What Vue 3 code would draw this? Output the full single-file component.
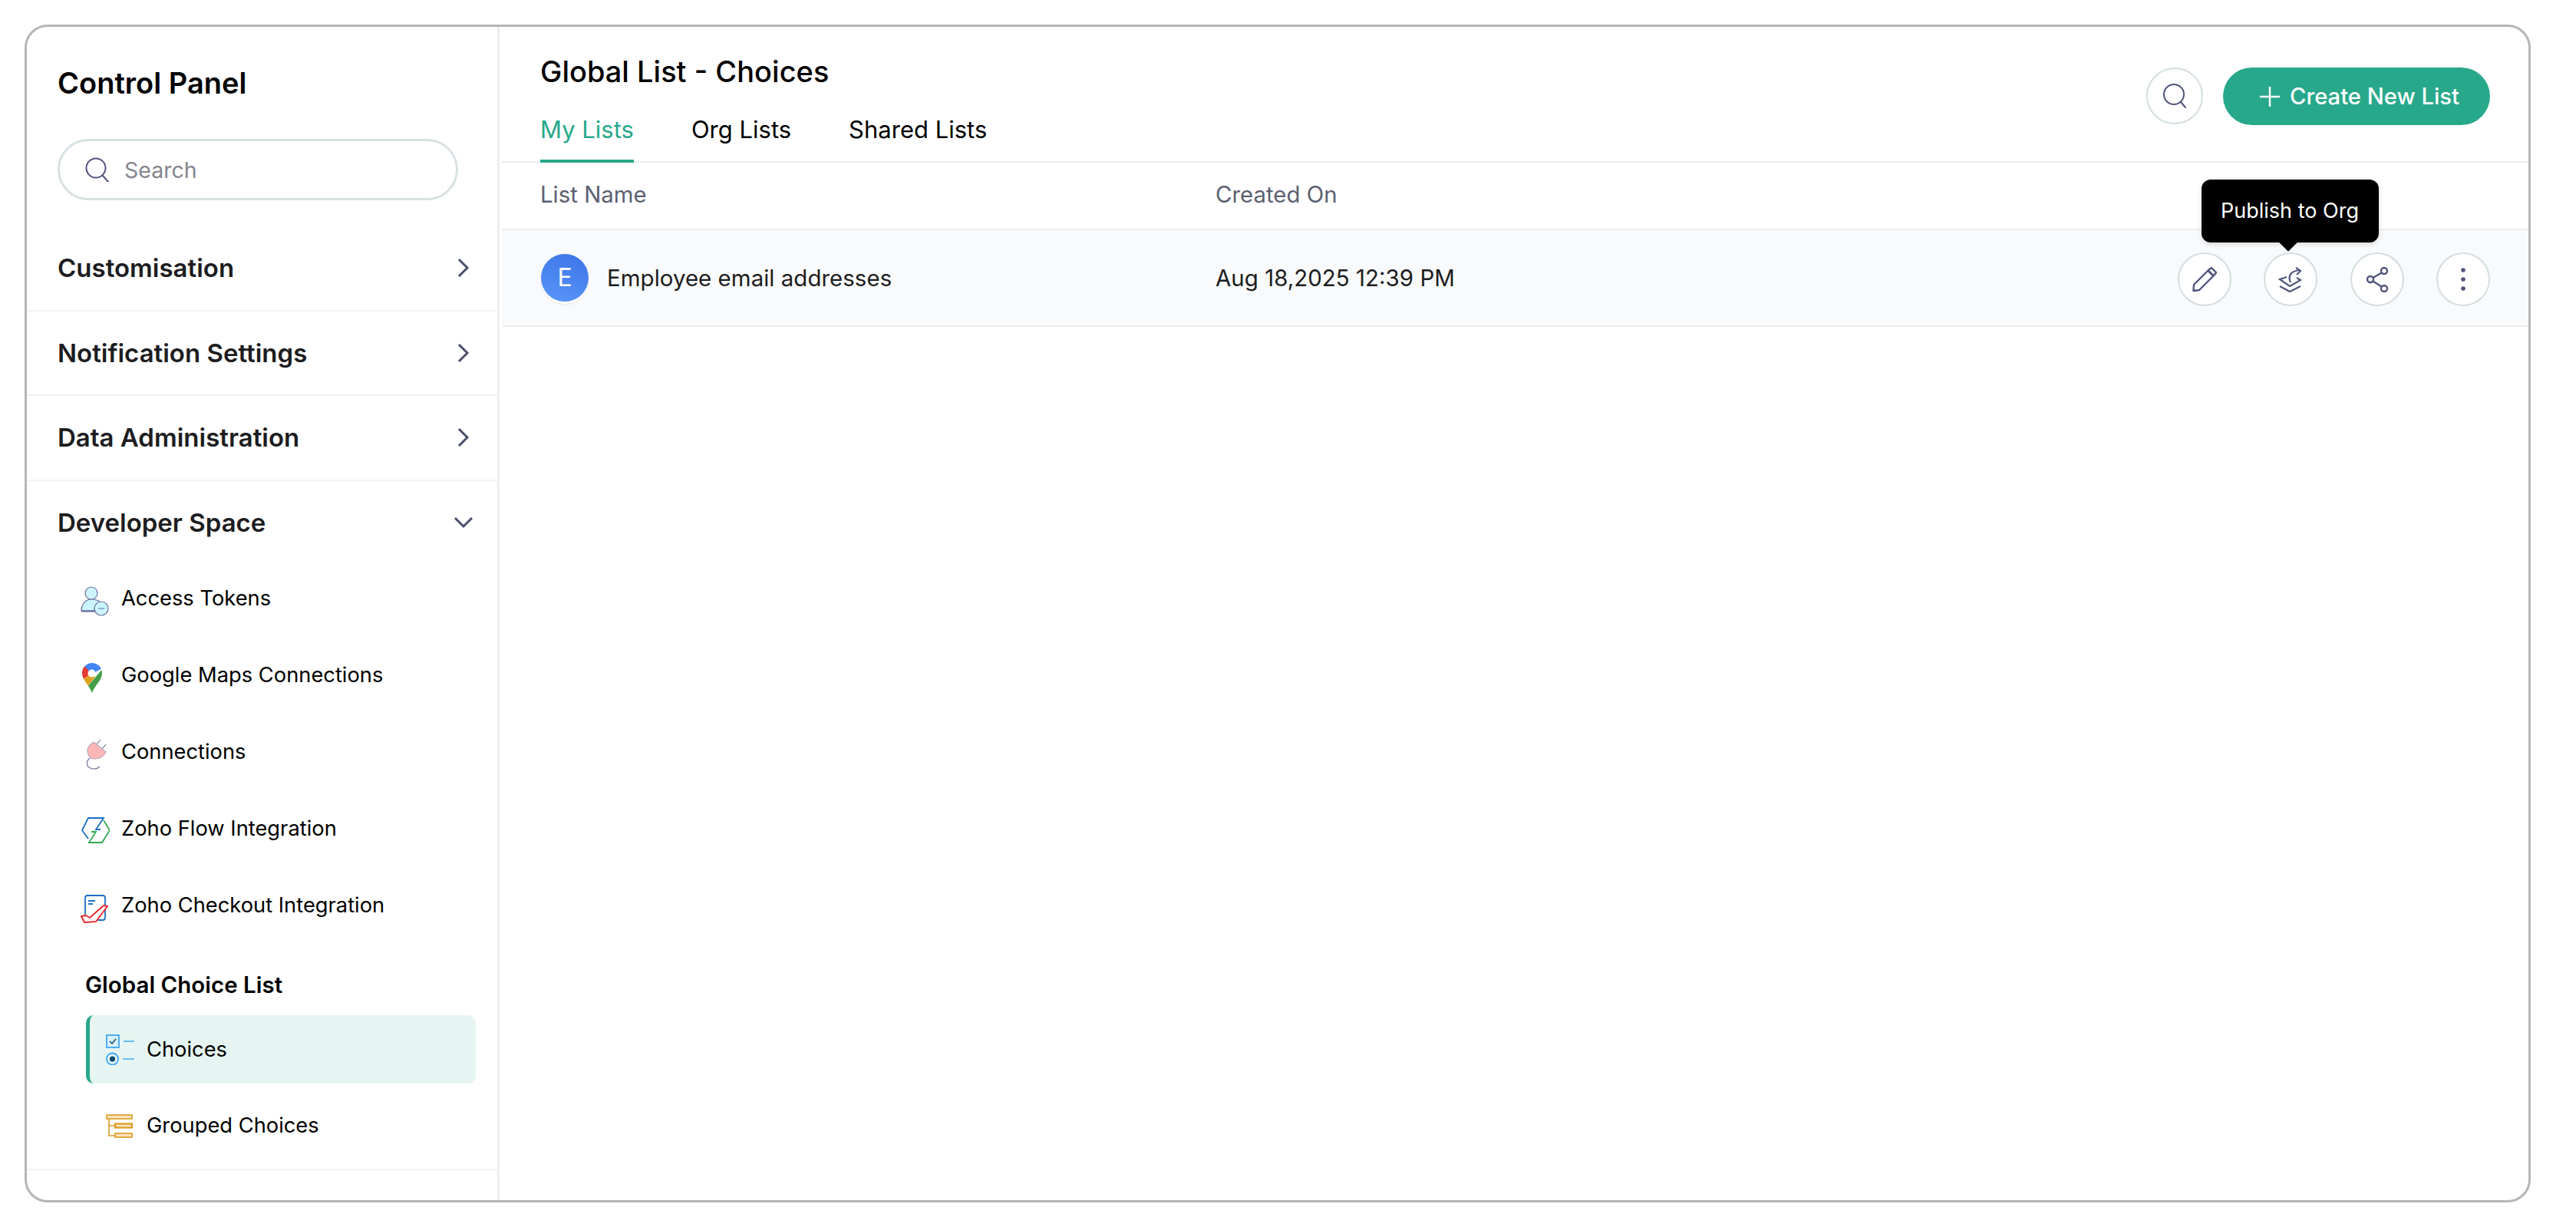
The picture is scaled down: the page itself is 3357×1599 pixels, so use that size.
<script setup>
const sections = ['Customisation', 'Notification Settings', 'Data Administration']
const tabs = ['My Lists', 'Org Lists', 'Shared Lists']
</script>

<template>
  <div class="page">
    <div class="frame">
      <aside class="sidebar">
        <h1 class="panel-title">Control Panel</h1>
        <div class="search">
          <svg class="search-icon" viewBox="0 0 32 32" fill="none" stroke="#50557a" stroke-width="2">
            <circle cx="14" cy="14" r="12.500" />
            <path d="M23 24l7 8" stroke-linecap="round" />
          </svg>
          <span>Search</span>
        </div>

        <div class="sections">
          <div v-for="s in sections" :key="s" class="section-row">
            <span>{{ s }}</span>
            <svg class="chevron" viewBox="0 0 16 26" fill="none" stroke="#4a4e6b" stroke-width="3">
              <path d="M2 2l11 11L2 24" />
            </svg>
          </div>
          <div class="section-row dev-head">
            <span>Developer Space</span>
            <svg class="chevron-down" viewBox="0 0 26 16" fill="none" stroke="#4a4e6b" stroke-width="3">
              <path d="M2 2l11 11L24 2" />
            </svg>
          </div>
        </div>

        <div class="nav-item">
          <svg class="nav-icon" viewBox="0 0 38 42" stroke="#6a6f9c" stroke-width="1.200">
            <circle cx="14" cy="11" r="8" fill="#ccf4ff" />
            <path d="M1 34c0-9 6-15 13-15 5 0 9 1 12 4-4 1-8 5-8 11z" fill="#ccf4ff" />
            <path d="M1 34.500h18" stroke-width="2.200" />
            <circle cx="27" cy="31" r="9" fill="#ccf4ff" />
            <path d="M23 31h8" stroke="#8fb3cf" stroke-width="2" />
          </svg>
          <span>Access Tokens</span>
        </div>
        <div class="nav-item">
          <svg class="nav-icon" viewBox="0 0 38 42">
            <clipPath id="pin">
              <path d="M15 2a13 13 0 0 1 13 13c0 10-9 15-13 26C11 30 2 25 2 15A13 13 0 0 1 15 2z" />
            </clipPath>
            <g clip-path="url(#pin)">
              <polygon points="0,0 32,0 30,8 15,16 4,7" fill="#4285f4" />
              <polygon points="0,4 5,6 14,16 2,24 0,24" fill="#e53935" />
              <polygon points="2,24 14,16 19,20 8,34" fill="#dfa11f" />
              <polygon points="30,8 30,20 15,44 8,34" fill="#43a047" />
            </g>
            <circle cx="14.500" cy="15.500" r="5" fill="#fff" />
          </svg>
          <span>Google Maps Connections</span>
        </div>
        <div class="nav-item">
          <svg class="nav-icon" viewBox="0 0 38 42" fill="none" stroke="#6a6a90" stroke-width="1.100">
            <path d="M21 8l5-6M28 14l5-6" />
            <path d="M17 5l16 13c-3 6-8 9-15 9-6 0-9-5-9-11 0-5 4-8 8-11z" fill="#fdb6b6" stroke="#b9a4b8" />
            <path d="M12 26c-5 4-5 11 1 13 4 2 9 1 12-2" />
          </svg>
          <span>Connections</span>
        </div>
        <div class="nav-item">
          <svg class="nav-icon" viewBox="0 0 38 42" fill="none" stroke-width="1.800">
            <path d="M10 31L2 20l8-16h20L20 19h6" stroke="#1e6fc4" />
            <path d="M30 7l8 13-10 16H11l9-14h-6" stroke="#34a853" />
          </svg>
          <span>Zoho Flow Integration</span>
        </div>
        <div class="nav-item">
          <svg class="nav-icon" viewBox="0 0 38 42" fill="none" stroke-width="1.800">
            <rect x="6" y="5" width="26" height="32" rx="3" stroke="#1e6fc4" />
            <path d="M10 12h9M10 16h6" stroke="#1e6fc4" />
            <path d="M1 32l6-1 5 3 18-16 5 1-15 20-15 1z" fill="#fff" stroke="#e62e2e" stroke-width="2" stroke-linejoin="round" />
          </svg>
          <span>Zoho Checkout Integration</span>
        </div>

        <div class="group-title">Global Choice List</div>
        <div class="sub-item active">
          <svg class="sub-icon" viewBox="0 0 38 42" fill="none">
            <rect x="1" y="3" width="16" height="16" fill="#d8f0fb" stroke="#3fa9f5" stroke-width="1.800" />
            <path d="M5 11l3 3 5-6" stroke="#0c4a6e" stroke-width="1.500" />
            <path d="M23 11h14M22 34h15" stroke="#3fa9f5" stroke-width="1.400" />
            <circle cx="8.500" cy="34" r="7.500" stroke="#3fa9f5" stroke-width="1.800" />
            <circle cx="8.500" cy="34" r="3.600" fill="#0c4a6e" />
          </svg>
          <span>Choices</span>
        </div>
        <div class="sub-item">
          <svg class="sub-icon" viewBox="0 0 38 42" stroke="#dc9a22" stroke-width="1.600" fill="#fae3bd">
            <rect x="1" y="7" width="33" height="5" />
            <rect x="12" y="18.500" width="22" height="5" stroke-width="2.200" />
            <rect x="12" y="31" width="22" height="5" />
            <path d="M4 12v22h8M4 21h8" fill="none" />
          </svg>
          <span>Grouped Choices</span>
        </div>
        <div class="side-end"></div>
      </aside>

      <main class="main">
        <header class="main-head">
          <div class="head-left">
            <h2 class="list-title">Global List - Choices</h2>
            <nav class="tabs">
              <a v-for="(t, i) in tabs" :key="t" class="tab" :class="{ on: i === 0 }">{{ t }}</a>
            </nav>
          </div>
          <div class="head-right">
            <button class="round big">
              <svg viewBox="0 0 32 34" width="32" height="34" fill="none" stroke="#50557a" stroke-width="2">
                <circle cx="15" cy="15" r="13" />
                <path d="M24 25l6 7" stroke-linecap="round" />
              </svg>
            </button>
            <button class="create">
              <svg viewBox="0 0 26 26" width="26" height="26" stroke="#fff" stroke-width="2.400">
                <path d="M13 0v26M0 13h26" />
              </svg>
              Create New List
            </button>
          </div>
        </header>

        <div class="table-head">
          <span>List Name</span>
          <span>Created On</span>
        </div>
        <div class="table-row">
          <div class="name-cell">
            <span class="avatar">E</span>
            <span>Employee email addresses</span>
          </div>
          <div class="date-cell">Aug 18,2025 12:39 PM</div>
          <div class="actions">
            <button class="round">
              <svg viewBox="0 0 32 34" width="32" height="34" fill="none" stroke="#50557a" stroke-width="2.400" stroke-linejoin="round">
                <path d="M1.500 32L2 24 22 4l3-2 6 6-2 3L9 31z" />
                <path d="M20.500 5.500l7 7" stroke-width="3" />
              </svg>
            </button>
            <button class="round">
              <svg viewBox="0 0 32 34" width="32" height="34" fill="none" stroke="#50557a" stroke-width="2.200">
                <path d="M11 14l-9 3 13 9 14-8-5-3" />
                <path d="M2 26l13 7 14-7" />
                <path d="M16 21c-4-9 1-15 12-16" />
                <path d="M23 2l6 4-5 5" />
              </svg>
            </button>
            <button class="round">
              <svg viewBox="0 0 32 34" width="32" height="34" fill="none" stroke="#50557a" stroke-width="2.400">
                <circle cx="25" cy="6" r="4" />
                <circle cx="7" cy="17" r="4" />
                <circle cx="25" cy="29" r="4" />
                <path d="M21.500 8.500L10.500 15M10.500 19.500l11 7" />
              </svg>
            </button>
            <button class="round">
              <svg viewBox="0 0 8 34" width="8" height="34" fill="#50557a">
                <circle cx="4" cy="5" r="2.800" />
                <circle cx="4" cy="17" r="2.800" />
                <circle cx="4" cy="29" r="2.800" />
              </svg>
            </button>
            <div class="tooltip">Publish to Org</div>
          </div>
        </div>
      </main>
    </div>
  </div>
</template>

<style>
html,
body {
  margin: 0;
  background: #fff;
}
</style>

<style scoped>
.page {
  padding: 32px 59px 32px 32px;
  font-family: Inter, 'Noto Sans', sans-serif;
  color: #000;
}

.frame {
  display: flex;
  height: 1535px;
  border: 3px solid #b6b6b6;
  border-radius: 30px;
  overflow: hidden;
  box-sizing: border-box;
}

/* sidebar */
.sidebar {
  width: 616px;
  flex: none;
  box-sizing: border-box;
  border-right: 3px solid #eceef0;
}

.panel-title {
  margin: 50px 0 0 40px;
  font-size: 38px;
  line-height: 46px;
  font-weight: 600;
}

.search {
  display: flex;
  align-items: center;
  gap: 19px;
  width: 522px;
  height: 80px;
  margin: 50px 0 0 40px;
  padding-left: 33px;
  box-sizing: border-box;
  border: 3px solid #d8e0e3;
  border-radius: 40px;
  font-size: 28.5px;
  color: #85858e;
}

.search-icon {
  width: 32px;
  height: 32px;
}

.sections {
  margin-top: 34px;
}

.section-row {
  display: flex;
  align-items: center;
  justify-content: space-between;
  height: 110.5px;
  padding: 0 36px 0 40px;
  box-sizing: border-box;
  border-bottom: 2px solid #f1f2f3;
  font-size: 33px;
  font-weight: 600;
  color: #1d1d21;
}

.dev-head {
  height: 103px;
  border-bottom: 0;
  padding-top: 6px;
  padding-right: 31px;
}

.chevron {
  width: 16px;
  height: 26px;
}

.chevron-down {
  width: 26px;
  height: 16px;
}

.nav-item {
  display: flex;
  align-items: center;
  gap: 15px;
  height: 99px;
  margin-bottom: 1px;
  padding-left: 70px;
  font-size: 27.3px;
}

.nav-icon {
  width: 38px;
  height: 42px;
  margin-top: 7px;
  flex: none;
}

.group-title {
  margin: 34px 0 0 76px;
  font-size: 29.5px;
  line-height: 40px;
  font-weight: 600;
}

.sub-item {
  display: flex;
  align-items: center;
  gap: 15px;
  width: 508px;
  height: 100px;
  margin: 5px 0 0 77px;
  padding-left: 26px;
  box-sizing: border-box;
  font-size: 27.3px;
}

.sub-item.active {
  height: 89px;
  margin-top: 20px;
  padding-left: 21px;
  background: #e6f5f1;
  border-left: 5px solid #28a88a;
  border-radius: 10px;
}

.sub-icon {
  width: 38px;
  height: 42px;
  flex: none;
}

.side-end {
  margin-top: 6px;
  border-top: 2px solid #f1f2f3;
}

/* main */
.main {
  flex: 1;
  min-width: 0;
  margin-left: 3px;
}

.main-head {
  display: flex;
  justify-content: space-between;
  height: 177px;
  padding: 36px 50px 0 50px;
  box-sizing: border-box;
  border-bottom: 2px solid #ebedef;
}

.list-title {
  margin: 0;
  font-size: 38px;
  line-height: 44px;
  font-weight: 500;
}

.tabs {
  display: flex;
  gap: 75px;
  margin-top: 31px;
}

.tab {
  height: 66px;
  box-sizing: border-box;
  font-size: 31px;
  line-height: 46px;
}

.tab.on {
  color: #28a88a;
  border-bottom: 4px solid #28a88a;
}

.head-right {
  display: flex;
  gap: 26px;
  margin-top: 17px;
}

.round {
  display: flex;
  align-items: center;
  justify-content: center;
  width: 70px;
  height: 70px;
  padding: 0;
  box-sizing: border-box;
  border: 2.500px solid #d4dde0;
  border-radius: 50%;
  background: #fff;
}

.round.big {
  width: 74px;
  height: 74px;
}

.create {
  display: flex;
  align-items: center;
  gap: 13px;
  width: 348px;
  height: 75px;
  padding: 0 0 0 48px;
  box-sizing: border-box;
  border: 0;
  border-radius: 38px;
  background: #28a88a;
  color: #fff;
  font-family: inherit;
  font-size: 29.2px;
  font-weight: 500;
}

.table-head {
  display: grid;
  grid-template-columns: 880px 1fr;
  align-items: center;
  height: 88px;
  padding: 0 0 3px 50px;
  box-sizing: border-box;
  border-bottom: 2px solid #ebedef;
  font-size: 29.4px;
  color: #5b6070;
}

.table-row {
  display: grid;
  grid-template-columns: 880px 1fr auto;
  align-items: center;
  height: 126px;
  padding: 0 50px 0 50px;
  box-sizing: border-box;
  border-bottom: 2px solid #ebedef;
  background: #f9fafc;
  font-size: 29.5px;
  color: #1d1d21;
}

.name-cell {
  display: flex;
  align-items: center;
  gap: 24px;
  margin-left: 1px;
  margin-top: -1px;
}

.date-cell {
  margin-top: -1px;
}

.avatar {
  display: flex;
  align-items: center;
  justify-content: center;
  width: 62px;
  height: 62px;
  border-radius: 50%;
  background: linear-gradient(200deg, #3a74e6, #5a97fa);
  box-shadow: 0 3px 0 #fff, 0 4px 3px rgba(0, 0, 0, 0.08);
  color: #fff;
  font-size: 32px;
}

.actions {
  position: relative;
  display: flex;
  gap: 42.500px;
  margin-top: 4px;
}

.tooltip {
  position: absolute;
  left: 31px;
  bottom: 83px;
  width: 231px;
  height: 82px;
  border-radius: 12px;
  background: #000;
  box-shadow: 0 2px 6px rgba(0, 0, 0, 0.15);
  color: #fff;
  font-size: 27px;
  line-height: 82px;
  text-align: center;
}

.tooltip::after {
  content: '';
  position: absolute;
  left: 104px;
  bottom: -8px;
  width: 18px;
  height: 18px;
  background: #000;
  transform: rotate(45deg);
}
</style>
